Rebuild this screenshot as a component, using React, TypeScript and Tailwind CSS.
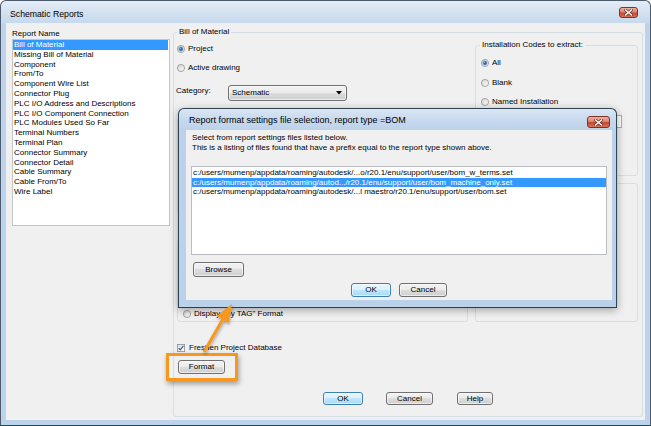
import React from "react";

function Radio({ checked }: { checked?: boolean }) {
  return (
    <svg width="8" height="8" viewBox="0 0 8 8" className="shrink-0">
      <defs>
        <linearGradient id="rgrad" x1="0" y1="0" x2="1" y2="1">
          <stop offset="0" stopColor="#d4d4d4" />
          <stop offset="1" stopColor="#ffffff" />
        </linearGradient>
      </defs>
      <circle cx="4" cy="4" r="3.55" fill="url(#rgrad)" stroke="#8e8f8f" strokeWidth="0.8" />
      {checked && (
        <>
          <circle cx="4" cy="4" r="2.2" fill="#2b5f9e" stroke="#9dbfe6" strokeWidth="0.7" />
          <circle cx="3.5" cy="3.5" r="0.8" fill="#86b6ea" />
        </>
      )}
    </svg>
  );
}

function Check() {
  return (
    <svg width="8" height="8" viewBox="0 0 8 8" className="shrink-0">
      <defs>
        <linearGradient id="cgrad" x1="0" y1="0" x2="1" y2="1">
          <stop offset="0" stopColor="#dcdcdc" />
          <stop offset="1" stopColor="#ffffff" />
        </linearGradient>
      </defs>
      <rect x="0.4" y="0.4" width="7.2" height="7.2" fill="url(#cgrad)" stroke="#8e8f8f" strokeWidth="0.8" />
      <path d="M1.7 4.1 L3.3 5.8 L6.4 1.9" fill="none" stroke="#3e5796" strokeWidth="1.2" />
    </svg>
  );
}

function CloseX() {
  return (
    <svg width="9" height="7" viewBox="0 0 9 7">
      <path d="M1.5 1 L7.5 6 M7.5 1 L1.5 6" stroke="#5a2419" strokeWidth="2.6" strokeLinecap="square" />
      <path d="M1.5 1 L7.5 6 M7.5 1 L1.5 6" stroke="#ffffff" strokeWidth="1.5" strokeLinecap="square" />
    </svg>
  );
}

function Btn({ children, className, def }: { children: React.ReactNode; className: string; def?: boolean }) {
  return (
    <div
      className={
        "flex items-center justify-center rounded-[3px] border leading-[10px] shadow-[inset_0_0_0_1px_rgba(255,255,255,0.55)] " +
        (def
          ? "border-[#3c7fb1] bg-[linear-gradient(to_bottom,#eaf6fd_0%,#d9f0fc_50%,#bee6fd_50%,#a7d9f5_100%)] "
          : "border-[#707070] bg-[linear-gradient(to_bottom,#f2f2f2_0%,#ebebeb_50%,#dddddd_50%,#cfcfcf_100%)] ") +
        className
      }
    >
      {children}
    </div>
  );
}

const reports = [
  "Bill of Material",
  "Missing Bill of Material",
  "Component",
  "From/To",
  "Component Wire List",
  "Connector Plug",
  "PLC I/O Address and Descriptions",
  "PLC I/O Component Connection",
  "PLC Modules Used So Far",
  "Terminal Numbers",
  "Terminal Plan",
  "Connector Summary",
  "Connector Detail",
  "Cable Summary",
  "Cable From/To",
  "Wire Label",
];

const files = [
  "c:/users/mumenp/appdata/roaming/autodesk/...o/r20.1/enu/support/user/bom_w_terms.set",
  "c:/users/mumenp/appdata/roaming/autod.../r20.1/enu/support/user/bom_machine_only.set",
  "c:/users/mumenp/appdata/roaming/autodesk/...l maestro/r20.1/enu/support/user/bom.set",
];

export default function App() {
  return (
    <div className="relative h-[426px] w-[651px] overflow-hidden bg-white font-['Liberation_Sans',Arial,sans-serif] text-[8px] text-black">
      {/* Main window */}
      <div className="flex h-[426px] w-[651px] flex-col rounded-t-[6px] border border-[#4b5b6b] border-b-[#1b4a58] bg-[#bcd3eb] bg-[linear-gradient(to_bottom,#e4edf7_0px,#d3e1f0_12px,#c6d9ee_22px,#bcd3eb_23px)]">
        <div className="flex h-[22px] items-start justify-between">
          <span className="ml-[9px] mt-[8px] text-[8.7px] leading-[10px]">Schematic Reports</span>
          <div className="mr-[12px] mt-[6px] flex h-[11px] w-[19px] items-center justify-center rounded-[3px] border border-[#7c3324] bg-[linear-gradient(to_bottom,#eab0a2_0%,#dc8570_45%,#c9462c_55%,#d6735c_100%)]">
            <CloseX />
          </div>
        </div>
        <div className="mx-[5px] flex h-[397px] items-start bg-[#f0f0f0]">
          {/* Left column */}
          <div className="ml-[6px] mt-[6px] flex w-[158px] flex-col">
            <div className="leading-[10px]">Report Name</div>
            <div className="h-[187px] border border-[#c3c6ca] bg-white">
              {reports.map((r, i) => (
                <div
                  key={r}
                  className={
                    "mr-[1px] h-[9.8px] whitespace-nowrap pl-[1px] leading-[9.8px] " +
                    (i === 0 ? "bg-[#3399ff] text-white" : "")
                  }
                >
                  {r}
                </div>
              ))}
            </div>
          </div>

          {/* Bill of Material group */}
          <fieldset className="ml-[3px] mt-[4px] h-[390px] w-[470px] rounded-[3px] border border-[#d5dfe5]">
            <legend className="ml-[3px] px-[2px] leading-[10px]">Bill of Material</legend>
            <div className="flex">
              <div className="flex w-[301px] flex-col">
                <div className="ml-[3px] mt-[7px] flex h-[10px] items-center gap-[3px] leading-[10px]">
                  <Radio checked />
                  <span>Project</span>
                </div>
                <div className="ml-[3px] mt-[9px] flex h-[10px] items-center gap-[3px] leading-[10px]">
                  <Radio />
                  <span>Active drawing</span>
                </div>
                <div className="ml-[2px] mt-[12px] flex h-[16px] items-start">
                  <span className="mt-[1px] w-[52px] leading-[10px]">Category:</span>
                  <div className="flex h-[16px] w-[119px] items-center justify-between rounded-[3px] border border-[#707070] bg-[linear-gradient(to_bottom,#f2f2f2_0%,#ebebeb_50%,#dddddd_50%,#cfcfcf_100%)] pl-[3px] pr-[4px] leading-[10px] shadow-[inset_0_0_0_1px_rgba(255,255,255,0.55)]">
                    <span>Schematic</span>
                    <svg width="6" height="4" viewBox="0 0 6 4">
                      <path d="M0 0 L6 0 L3 3.5 Z" fill="#000" />
                    </svg>
                  </div>
                </div>
                <div className="ml-[3px] mt-[17px] h-[96px] w-[291px] rounded-[3px] border border-[#d5dfe5]" />
                <div className="ml-[3px] mt-[25px] flex h-[83px] w-[291px] flex-col justify-end rounded-[3px] border border-[#d5dfe5]">
                  <div className="mb-[2px] ml-[5px] flex h-[10px] items-center gap-[3px] leading-[10px]">
                    <Radio />
                    <span>Display "By TAG" Format</span>
                  </div>
                </div>
              </div>
              <div className="flex w-[163px] flex-col">
                <fieldset className="mt-[3px] h-[136px] rounded-[3px] border border-[#d5dfe5]">
                  <legend className="ml-[4px] px-[2px] leading-[10px]">Installation Codes to extract:</legend>
                  <div className="ml-[5px] mt-[8px] flex h-[10px] items-center gap-[3px] leading-[10px]">
                    <Radio checked />
                    <span>All</span>
                  </div>
                  <div className="ml-[5px] mt-[10px] flex h-[10px] items-center gap-[3px] leading-[10px]">
                    <Radio />
                    <span>Blank</span>
                  </div>
                  <div className="ml-[5px] mt-[9px] flex h-[10px] items-center gap-[3px] leading-[10px]">
                    <Radio />
                    <span>Named Installation</span>
                  </div>
                  <div className="ml-[4px] mt-[8px] h-[13px] w-[142px] border border-[#abadb3] bg-white" />
                </fieldset>
                <div className="mt-[7px] h-[139px] rounded-[3px] border border-[#d5dfe5]" />
              </div>
            </div>

            <div className="ml-[3px] mt-[21px] flex h-[10px] items-center gap-[4px] leading-[10px]">
              <Check />
              <span>Freshen Project Database</span>
            </div>
            <Btn className="ml-[4px] mt-[7px] h-[14px] w-[47px]">Format</Btn>
            <div className="mt-[18px] flex justify-center">
              <Btn def className="h-[13px] w-[40px]">OK</Btn>
              <Btn className="ml-[23px] h-[13px] w-[47px]">Cancel</Btn>
              <Btn className="ml-[24px] h-[13px] w-[36px]">Help</Btn>
            </div>
          </fieldset>
        </div>
      </div>

      {/* Overlay dialog */}
      <div className="absolute left-[178px] top-[108px] flex h-[200px] w-[439px] flex-col rounded-t-[6px] border border-[#2f4453] border-b-[#1b4556] bg-[#bad1ea] bg-[linear-gradient(to_bottom,#d9e6f4_0px,#c6d8ed_12px,#bcd2ea_21px,#bad1ea_100%)] shadow-[0_2px_8px_rgba(0,0,0,0.35)]">
        <div className="flex h-[21px] items-start justify-between">
          <span className="ml-[10px] mt-[6px] text-[9px] leading-[11px]">
            Report format settings file selection, report type =BOM
          </span>
          <div className="mr-[6px] mt-[7px] flex h-[12px] w-[23px] items-center justify-center rounded-[3px] border border-[#7c3324] bg-[linear-gradient(to_bottom,#eab0a2_0%,#dc8570_45%,#c9462c_55%,#d6735c_100%)]">
            <CloseX />
          </div>
        </div>
        <div className="ml-[7px] mr-[4px] flex h-[170px] flex-col bg-[#f0f0f0]">
          <div className="pl-[6px] pt-[3px] leading-[10px]">
            <div>Select from report settings files listed below.</div>
            <div>This is a listing of files found that have a prefix equal to the report type shown above.</div>
          </div>
          <div className="ml-[5px] mt-[13px] h-[89px] w-[416px] border border-[#b9bcc1] bg-white pt-[1px]">
            {files.map((f, i) => (
              <div
                key={f}
                className={
                  "h-[9.7px] whitespace-nowrap pl-[1px] leading-[9.7px] " +
                  (i === 1 ? "bg-[#3399ff] text-white" : "")
                }
              >
                {f}
              </div>
            ))}
          </div>
          <Btn className="ml-[7px] mt-[7px] h-[15px] w-[51px]">Browse</Btn>
          <div className="mt-[6px] flex justify-center">
            <Btn def className="h-[14px] w-[40px]">OK</Btn>
            <Btn className="ml-[8px] h-[14px] w-[48px]">Cancel</Btn>
          </div>
        </div>
      </div>

      {/* Orange highlight box */}
      <div className="absolute left-[166px] top-[353px] h-[28px] w-[72px] border-[3px] border-[#f7981d] shadow-[1px_3px_5px_rgba(0,0,0,0.35)]" />

      {/* Orange arrow */}
      <svg className="absolute left-[195px] top-[295px]" width="50" height="65" viewBox="195 295 50 65">
        <defs>
          <filter id="ash" x="-50%" y="-50%" width="200%" height="200%">
            <feDropShadow dx="0.5" dy="2" stdDeviation="1.5" floodColor="#000" floodOpacity="0.35" />
          </filter>
        </defs>
        <g filter="url(#ash)">
          <line x1="204" y1="352" x2="223" y2="319" stroke="#f7981d" strokeWidth="3" />
          <polygon points="232,304 228.8,323.1 216.8,315.9" fill="#f7981d" />
        </g>
      </svg>
    </div>
  );
}
